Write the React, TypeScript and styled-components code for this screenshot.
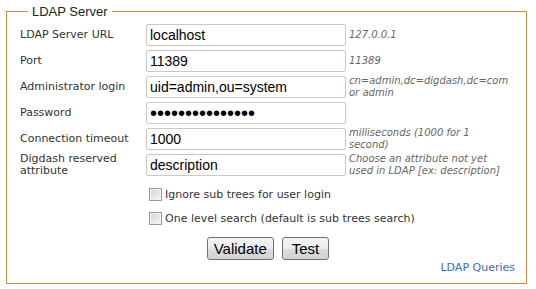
import React from "react";
import styled, { createGlobalStyle } from "styled-components";

const Global = createGlobalStyle`
  html, body { margin: 0; padding: 0; background: #ffffff; }
  body { font-family: "DejaVu Sans", Verdana, sans-serif; }
`;

const Page = styled.div`
  width: 536px;
  height: 289px;
  padding: 4px 0 0 6px;
  box-sizing: border-box;
`;

const Fieldset = styled.fieldset`
  width: 521px;
  box-sizing: border-box;
  margin: 0;
  padding: 0 12px 9px 13px;
  border: 1px solid #d18a45;
  min-inline-size: 0;
`;

const Legend = styled.legend`
  font-family: "Liberation Sans", Arial, sans-serif;
  font-size: 13px;
  line-height: 15px;
  color: #222;
  padding: 0 4px;
  margin-left: 8px;
`;

const FormGrid = styled.div`
  display: grid;
  grid-template-columns: 124px 200px 158px;
  grid-auto-rows: 22px;
  column-gap: 2px;
  row-gap: 4px;
  align-items: center;
  padding-top: 5px;
`;

const Label = styled.label`
  font-size: 11px;
  line-height: 12px;
  color: #333;
`;

const TextInput = styled.input<{ $masked?: boolean }>`
  box-sizing: border-box;
  width: 200px;
  height: 22px;
  margin: 0;
  padding: 0 3px;
  border: 1px solid #c9c9c9;
  border-radius: 2px;
  font-family: "Liberation Sans", Arial, sans-serif;
  font-size: ${(p) => (p.$masked ? "20px" : "14px")};
  color: #000;
  background: #fff;
  outline: none;
`;

const Hint = styled.span`
  font-size: 10px;
  line-height: 12px;
  font-style: italic;
  color: #666;
  padding-left: 1px;
`;

const CheckList = styled.div`
  display: flex;
  flex-direction: column;
  gap: 4px;
  padding-top: 8px;
  padding-left: 125px;
`;

const CheckRow = styled.label`
  display: flex;
  align-items: center;
  height: 20px;
  font-size: 11px;
  color: #333;
`;

const Check = styled.input`
  appearance: none;
  -webkit-appearance: none;
  width: 13px;
  height: 13px;
  margin: 0 3px 0 4px;
  box-sizing: border-box;
  border: 1px solid #9a9a9a;
  background: linear-gradient(135deg, #d2d2d2 0%, #e9e9e9 60%, #f7f7f7 100%);
  box-shadow: inset 0 0 0 1px #f4f4f4;
`;

const ButtonBar = styled.div`
  display: flex;
  justify-content: center;
  gap: 8px;
  margin-top: 9px;
  padding-left: 2px;
`;

const Button = styled.button<{ $pad: number }>`
  height: 23px;
  padding: 0 ${(p) => p.$pad}px;
  margin: 0;
  border: 1px solid #707070;
  border-radius: 3px;
  background: linear-gradient(#f4f4f4 0%, #ececec 50%, #dddddd 51%, #d2d2d2 100%);
  font-family: "Liberation Sans", Arial, sans-serif;
  font-size: 15px;
  color: #000;
`;

const LinkRow = styled.div`
  display: flex;
  justify-content: flex-end;
  margin-top: 1px;
`;

const Link = styled.a`
  font-size: 11px;
  line-height: 13px;
  color: #3a6cc0;
  text-decoration: none;
  margin-right: -1px;
`;

type Field = { label: string; value: string; hint?: string; type?: string };

const fields: Field[] = [
  { label: "LDAP Server URL", value: "localhost", hint: "127.0.0.1" },
  { label: "Port", value: "11389", hint: "11389" },
  { label: "Administrator login", value: "uid=admin,ou=system", hint: "cn=admin,dc=digdash,dc=com or admin" },
  { label: "Password", value: "aaaaaaaaaaaaaaa", type: "password" },
  { label: "Connection timeout", value: "1000", hint: "milliseconds (1000 for 1 second)" },
  { label: "Digdash reserved attribute", value: "description", hint: "Choose an attribute not yet used in LDAP [ex: description]" },
];

export default function App() {
  return (
    <>
      <Global />
      <Page>
        <Fieldset>
          <Legend>LDAP Server</Legend>
          <FormGrid>
            {fields.map((f) => (
              <React.Fragment key={f.label}>
                <Label>{f.label}</Label>
                <TextInput
                  type={f.type ?? "text"}
                  $masked={f.type === "password"}
                  defaultValue={f.value}
                  readOnly
                />
                <Hint>{f.hint ?? ""}</Hint>
              </React.Fragment>
            ))}
          </FormGrid>
          <CheckList>
            <CheckRow>
              <Check type="checkbox" />
              Ignore sub trees for user login
            </CheckRow>
            <CheckRow>
              <Check type="checkbox" />
              One level search (default is sub trees search)
            </CheckRow>
          </CheckList>
          <ButtonBar>
            <Button $pad={6}>Validate</Button>
            <Button $pad={9}>Test</Button>
          </ButtonBar>
          <LinkRow>
            <Link href="#">LDAP Queries</Link>
          </LinkRow>
        </Fieldset>
      </Page>
    </>
  );
}
